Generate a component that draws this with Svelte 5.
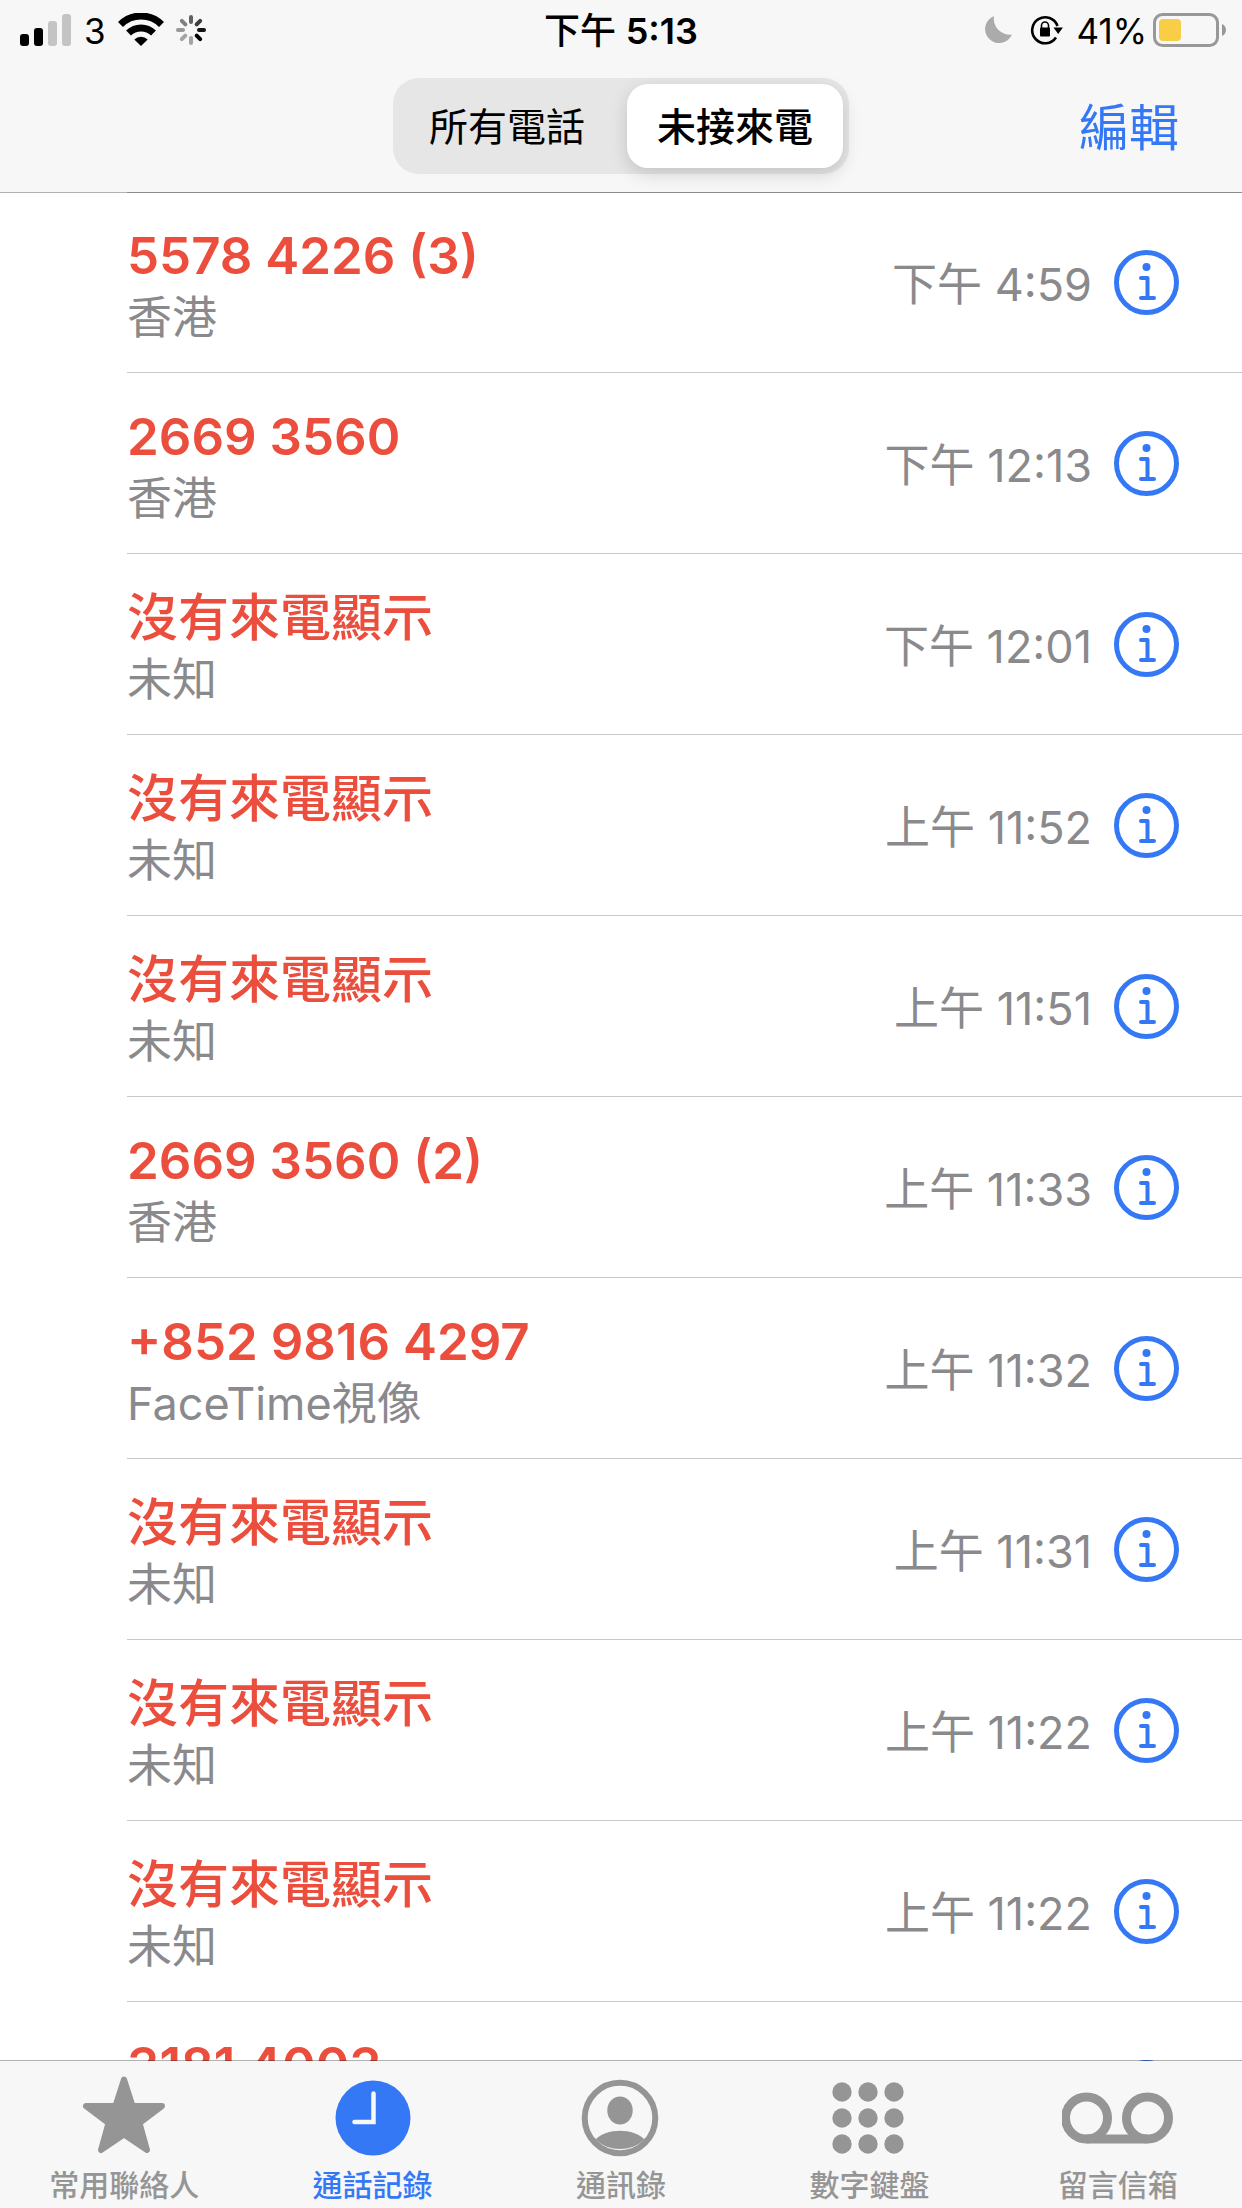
<script>
	const tabs = [
		{ id: 'favorites', label: '常用聯絡人' },
		{ id: 'recents', label: '通話記錄' },
		{ id: 'contacts', label: '通訊錄' },
		{ id: 'keypad', label: '數字鍵盤' },
		{ id: 'voicemail', label: '留言信箱' }
	];

	const calls = [
		{ name: '5578 4226 (3)', detail: '香港', time: '下午 4:59' },
		{ name: '2669 3560', detail: '香港', time: '下午 12:13' },
		{ name: '沒有來電顯示', detail: '未知', time: '下午 12:01' },
		{ name: '沒有來電顯示', detail: '未知', time: '上午 11:52' },
		{ name: '沒有來電顯示', detail: '未知', time: '上午 11:51' },
		{ name: '2669 3560 (2)', detail: '香港', time: '上午 11:33' },
		{ name: '+852 9816 4297', detail: 'FaceTime視像', time: '上午 11:32' },
		{ name: '沒有來電顯示', detail: '未知', time: '上午 11:31' },
		{ name: '沒有來電顯示', detail: '未知', time: '上午 11:22' },
		{ name: '沒有來電顯示', detail: '未知', time: '上午 11:22' },
		{ name: '3181 4003' }
	];

	// spinner spokes, clockwise from the top
	const spokes = [0.6, 0.75, 0.92, 1, 0.33, 0.33, 0.38, 0.48];

	let filter = $state('missed');
	let activeTab = $state('recents');

	const isNumber = (name) => /^[+\d]/.test(name);
</script>

<div class="phone">
	<header>
		<div class="status">
			<div class="side start">
				<svg class="signal" width="52" height="34" viewBox="0 0 52 34" aria-hidden="true">
					<rect x="0" y="21" width="9" height="12" rx="3" />
					<rect x="14" y="15" width="9" height="18" rx="3" />
					<rect x="28" y="8" width="9" height="25" rx="3" fill="#c4c4c4" />
					<rect x="42" y="1" width="9" height="32" rx="3" fill="#c4c4c4" />
				</svg>
				<span class="carrier">3</span>
				<svg class="wifi" width="46" height="34" viewBox="0 0 46 34" aria-hidden="true">
					<path d="M2.5 11.5a29 29 0 0 1 41 0" fill="none" stroke="#000" stroke-width="7" />
					<path d="M10.5 20a18 18 0 0 1 25 0" fill="none" stroke="#000" stroke-width="7" />
					<path d="M16.3 26.6a9.5 9.5 0 0 1 13.4 0L23 33z" />
				</svg>
				<svg class="spinner" width="30" height="30" viewBox="-15 -15 30 30" aria-hidden="true">
					{#each spokes as opacity, i}
						<path d="M0-13V-8" transform="rotate({i * 45})" stroke="#000" stroke-width="4" stroke-linecap="round" {opacity} />
					{/each}
				</svg>
			</div>
			<time class="clock">下午 <b>5:13</b></time>
			<div class="side end">
				<svg class="moon" width="28" height="28" viewBox="0 0 28 28" aria-hidden="true">
					<path d="M10 0A14 14 0 1 0 28 18.500A16 16 0 0 1 10 0z" fill="#ababab" />
				</svg>
				<svg class="lock" width="34" height="30" viewBox="0 0 34 30" aria-hidden="true">
					<path d="M27.500 11A13 13 0 1 0 26 22.500" fill="none" stroke="#000" stroke-width="2.600" />
					<path d="M23.500 12.500h9.400l-4.700 6.500z" />
					<rect x="10" y="12.500" width="10" height="9" rx="1" />
					<path d="M11.500 13v-2.500a3.500 3.500 0 0 1 7 0V13" fill="none" stroke="#000" stroke-width="1.600" />
				</svg>
				<span class="percent">41%</span>
				<svg class="battery" width="74" height="34" viewBox="0 0 74 34" aria-hidden="true">
					<rect x="1.500" y="1.500" width="63" height="31" rx="8" fill="none" stroke="#989898" stroke-width="3" />
					<rect x="6" y="6" width="22" height="22" rx="4" fill="#f7ce46" />
					<path d="M69 11c5.300 2 5.300 10 0 12z" fill="#989898" />
				</svg>
			</div>
		</div>
		<div class="nav">
			<div class="segments">
				<button class:selected={filter === 'all'} aria-pressed={filter === 'all'} onclick={() => (filter = 'all')}>所有電話</button>
				<button class:selected={filter === 'missed'} aria-pressed={filter === 'missed'} onclick={() => (filter = 'missed')}>未接來電</button>
			</div>
			<button class="edit">編輯</button>
		</div>
	</header>

	<ul class="calls">
		{#each calls as call}
			<li>
				<div class="who">
					<strong class:number={isNumber(call.name)}>{call.name}</strong>
					{#if call.detail}<span>{call.detail}</span>{/if}
				</div>
				{#if call.time}<time>{call.time}</time>{/if}
				<button class="info" aria-label="詳細資料">
					<svg width="65" height="65" viewBox="0 0 65 65" fill="none" stroke="currentColor" stroke-linecap="round" stroke-linejoin="round">
						<circle cx="32.500" cy="32.500" r="30" stroke-width="5" />
						<path d="M27 28h6.500v20M27 48h13" stroke-width="4" />
						<circle cx="32.500" cy="17" r="4" fill="currentColor" stroke="none" />
					</svg>
				</button>
			</li>
		{/each}
	</ul>

	<nav class="tabs">
		{#each tabs as tab}
			<button class:active={activeTab === tab.id} onclick={() => (activeTab = tab.id)}>
				<svg width="112" height="84" viewBox="0 0 112 84" fill="currentColor" aria-hidden="true">
					{#if tab.id === 'favorites'}
						<path d="M56 3.500L64.500 30H94L71.500 47L79 74L56 58.500L33 74L40.500 47L18 30H47.500z" stroke="currentColor" stroke-width="6" stroke-linejoin="round" />
					{:else if tab.id === 'recents'}
						<circle cx="56" cy="42" r="37.500" />
						<path d="M56.500 17.500V46H37.500" fill="none" stroke="#f7f7f7" stroke-width="4.500" stroke-linecap="round" />
					{:else if tab.id === 'contacts'}
						<circle cx="55" cy="42" r="35.300" fill="none" stroke="currentColor" stroke-width="6" />
						<ellipse cx="55" cy="34.500" rx="12.700" ry="14" />
						<path d="M30.500 63.500C36 57.500 45 54.700 55 54.700S74 57.500 79.500 63.500A36 36 0 0 1 30.500 63.500z" />
					{:else if tab.id === 'keypad'}
						{#each [16, 42, 68] as cy}
							{#each [29, 55, 81] as cx}
								<circle {cx} {cy} r="9.700" />
							{/each}
						{/each}
					{:else}
						<g fill="none" stroke="currentColor" stroke-width="9">
							<circle cx="24.500" cy="42" r="21" />
							<circle cx="85.500" cy="42" r="21" />
							<path d="M24.500 63h61" />
						</g>
					{/if}
				</svg>
				<span>{tab.label}</span>
			</button>
		{/each}
	</nav>
</div>

<style>
	:global(body) {
		margin: 0;
		background: #fff;
	}

	.phone {
		display: flex;
		flex-direction: column;
		height: 100vh;
		overflow: hidden;
		background: #fff;
		color: #000;
		font-family: Inter, 'Noto Sans CJK TC', sans-serif;
	}

	button {
		border: none;
		padding: 0;
		background: none;
		color: inherit;
		font: inherit;
		cursor: pointer;
	}

	svg {
		display: block;
		flex-shrink: 0;
	}

	/* the hairline is translucent and lies over the top of the list */
	header {
		position: relative;
		z-index: 1;
		flex-shrink: 0;
		margin-bottom: -1px;
		border-bottom: 1px solid rgba(0, 0, 0, 0.3);
		background: #f7f7f7;
		background-clip: padding-box;
	}

	.status {
		display: grid;
		grid-template-columns: 1fr auto 1fr;
		align-items: center;
		height: 60px;
		padding: 0 15px;
		font-size: 35px;
		line-height: 48px;
	}

	.side {
		display: flex;
		align-items: center;
	}

	.start { padding-left: 5px; }

	.end { justify-content: flex-end; }

	.carrier, .clock, .percent { padding-top: 2px; }

	.carrier { margin: 0 12px; }

	.spinner { margin-left: 12px; }

	.clock {
		font-size: 36px;
		font-weight: 500;
	}

	.clock b { font-weight: 600; }

	.moon { margin-right: 18px; }

	.lock { margin-right: 12px; }

	.percent { margin-right: 6px; }

	.nav {
		display: grid;
		grid-template-columns: 1fr auto 1fr;
		align-items: center;
		height: 132px;
		padding: 0 63px;
		box-sizing: border-box;
	}

	.segments {
		grid-column: 2;
		display: flex;
		gap: 12px;
		width: 456px;
		height: 96px;
		padding: 6px;
		box-sizing: border-box;
		border-radius: 26px;
		background: #e6e6e6;
	}

	.segments button {
		flex: 1;
		padding-bottom: 4px;
		border-radius: 21px;
		font-size: 39px;
	}

	.segments .selected {
		background: #fff;
		font-weight: 500;
		box-shadow: 0 6px 18px rgba(0, 0, 0, 0.15);
	}

	.edit {
		justify-self: end;
		padding-bottom: 4px;
		color: #3478f6;
		font-size: 50px;
	}

	.calls {
		flex: 1;
		min-height: 0;
		margin: 0;
		padding: 0 0 0 127px;
		overflow-y: auto;
		scrollbar-width: none;
		list-style: none;
	}

	.calls li {
		display: flex;
		align-items: center;
		height: 180px;
		padding-right: 63px;
		border-bottom: 1px solid #c8c8c8;
	}

	.calls li:first-child { box-shadow: inset 0 1px #c8c8c8; }

	.who {
		display: flex;
		flex: 1;
		flex-direction: column;
		min-height: 124px;
		padding-top: 8px;
	}

	.who strong {
		color: #eb4e3d;
		font-size: 51px;
		font-weight: 500;
		line-height: 64px;
	}

	.who .number { font-weight: 600; }

	.who span {
		color: #8a8a8d;
		font-size: 45px;
		line-height: 60px;
	}

	.calls time {
		padding-bottom: 2px;
		color: #8a8a8d;
		font-size: 45px;
	}

	.info {
		margin-left: 22px;
		color: #3478f6;
	}

	.tabs {
		position: relative;
		z-index: 1;
		display: flex;
		flex-shrink: 0;
		margin-top: -1px;
		border-top: 1px solid rgba(0, 0, 0, 0.3);
		background: #f7f7f7;
		background-clip: padding-box;
	}

	.tabs button {
		display: flex;
		flex: 1;
		flex-direction: column;
		align-items: center;
		gap: 3px;
		padding-top: 15px;
		color: #959595;
		font-size: 30px;
		font-weight: 500;
		line-height: 45px;
	}

	.tabs .active { color: #3478f6; }
</style>
